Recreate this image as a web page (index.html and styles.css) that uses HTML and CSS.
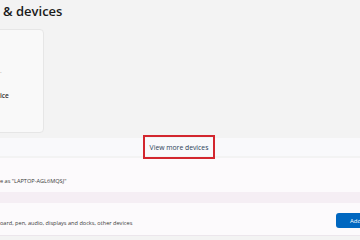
FILE: index.html
```html
<!DOCTYPE html>
<html lang="en">
<head>
    <meta charset="UTF-8">
    <title>Bluetooth &amp; devices</title>
    <link rel="stylesheet" href="styles.css">
</head>
<body>
    <h1 class="page-title">&amp; devices</h1>

    <!-- device cards -->
    <div class="cards">
        <div class="card">
            <span class="card-dot">·</span>
            <span class="card-label">ice</span>
        </div>
    </div>

    <div class="more-row">
        <a class="more-link">View more devices</a>
    </div>

    <div class="panel panel-name">
        <p class="panel-text">e as "LAPTOP-AGL6MQSJ"</p>
    </div>

    <div class="panel panel-add">
        <p class="panel-text">oard, pen, audio, displays and docks, other devices</p>
        <button class="add-btn">Add device</button>
    </div>
</body>
</html>
```

FILE: styles.css
```css
html, body {
    margin: 0;
    padding: 0;
}
body {
    width: 360px;
    height: 240px;
    overflow: hidden;
    background-color: #f3f3f3;
    font-family: 'Open Sans', 'Noto Sans', sans-serif;
    color: #1b1b1b;
}
.page-title {
    margin: 0;
    height: 29px;
    padding: 0 0 0 3px;
    font-size: 13px;
    font-weight: 600;
    line-height: 23px;
    color: #1a1a1a;
}
.cards {
    display: flex;
    height: 104px;
}
.card {
    width: 54px;
    margin-left: -10px;
    box-sizing: border-box;
    background-color: #f9f9f9;
    border: 1px solid #e6e6e6;
    border-radius: 4px;
    display: flex;
    flex-direction: column;
    padding: 39px 0 0 9px;
    font-size: 6.5px;
    color: #333;
}
.card-dot {
    line-height: 8px;
    color: #999;
}
.card-label {
    margin-top: 14px;
    font-weight: 600;
}
.more-row {
    margin-top: 5px;
    height: 18px;
    background-color: #f9f9fb;
    display: flex;
    justify-content: center;
    align-items: center;
}
.more-link {
    display: inline-flex;
    align-items: center;
    box-sizing: border-box;
    height: 24px;
    padding: 0 5px;
    margin-left: -2px;
    border: 2px solid #d3262e;
    font-size: 6.8px;
    color: #2c3e57;
}
.panel {
    box-sizing: border-box;
    background-color: #fcfafc;
    display: flex;
    align-items: flex-end;
}
.panel-name {
    margin-top: 2px;
    height: 45px;
    padding-bottom: 7px;
    border-bottom: 11px solid #f5eef4;
}
.panel-add {
    height: 33px;
    padding-bottom: 8px;
    border-bottom: 1px solid #ece6ec;
}
.panel-text {
    margin: 0;
    font-size: 5.6px;
    color: #3a3a3a;
    white-space: nowrap;
}
.add-btn {
    margin-left: auto;
    align-self: flex-start;
    margin-top: 10px;
    margin-right: -24px;
    width: 48px;
    height: 15px;
    padding: 0 0 0 14px;
    text-align: left;
    border: none;
    border-radius: 3px;
    background-color: #0067c0;
    color: #fff;
    font-family: inherit;
    font-size: 6px;
    white-space: nowrap;
    overflow: hidden;
}
```
